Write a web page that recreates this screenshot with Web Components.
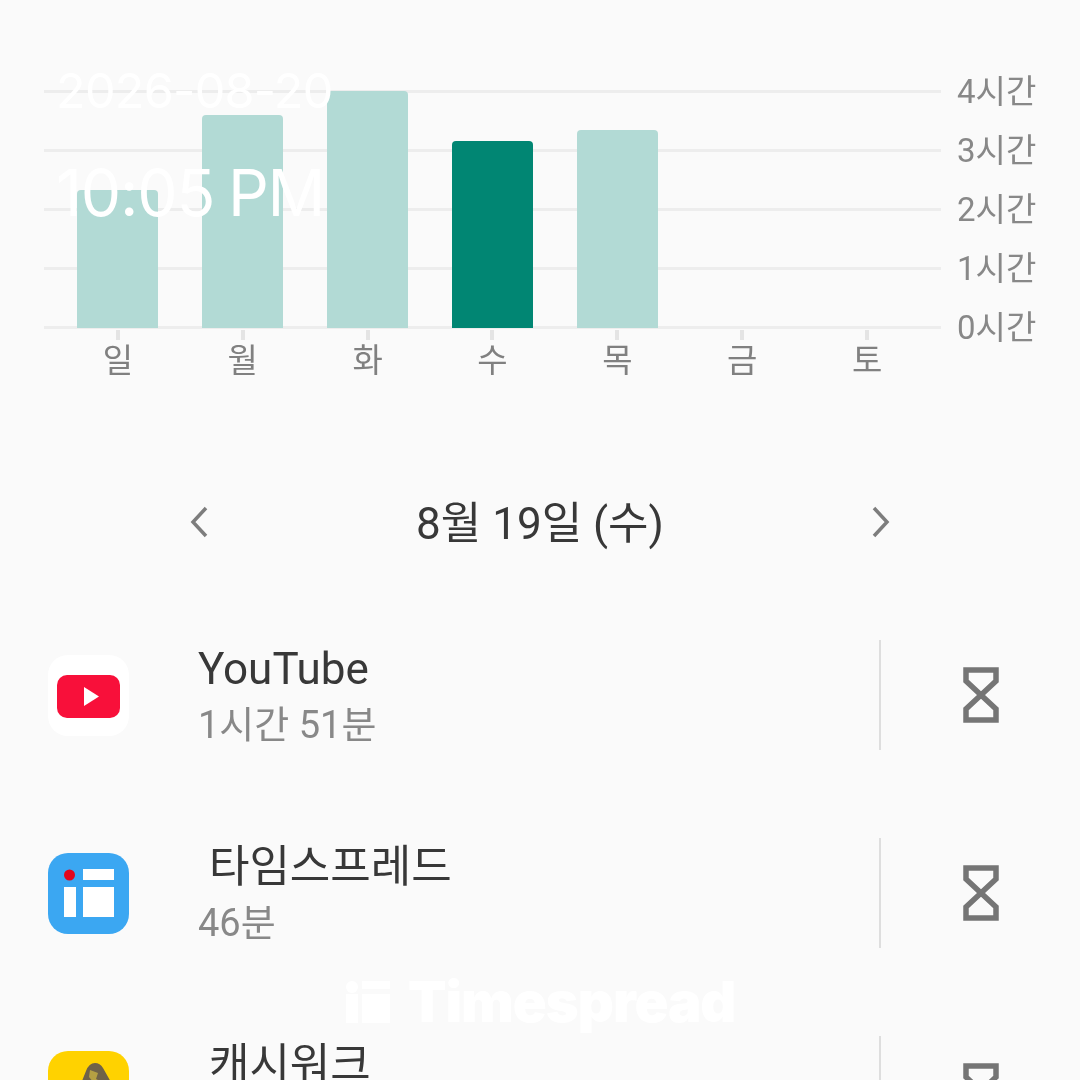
<!DOCTYPE html>
<html lang="ko">
<head>
<meta charset="utf-8">
<title>Screen time</title>
<style>
  html, body { margin: 0; height: 100%; background: #fafafa; overflow: hidden; }
  body { font-family: Roboto, "Noto Sans CJK KR", sans-serif; position: relative; width: 1080px; height: 1080px; }
  .content { filter: blur(.5px); }
</style>
</head>
<body>
<div class="content">
  <usage-chart></usage-chart>
  <date-nav label="8월 19일 (수)"></date-nav>
  <app-row name="YouTube" time="1시간 51분">
    <svg slot="icon" width="81" height="81" viewBox="0 0 81 81">
      <rect width="81" height="81" rx="20" fill="#fff"/>
      <rect x="9" y="20" width="63" height="43" rx="10" fill="#f8103a"/>
      <path d="M36 32 L51 41.500 L36 51 Z" fill="#fff"/>
    </svg>
  </app-row>
  <app-row name=" 타임스프레드" time="46분">
    <svg slot="icon" width="81" height="81" viewBox="0 0 81 81">
      <rect width="81" height="81" rx="20" fill="#3ba7f2"/>
      <rect x="16" y="34" width="12" height="30" fill="#fff"/>
      <rect x="35" y="16" width="31" height="11" fill="#fff"/>
      <rect x="35" y="34" width="31" height="30" fill="#fff"/>
      <circle cx="21.500" cy="22" r="5.500" fill="#e3061c"/>
    </svg>
  </app-row>
  <app-row name=" 캐시워크" time="">
    <svg slot="icon" width="81" height="81" viewBox="0 0 81 81">
      <rect width="81" height="81" rx="20" fill="#ffd200"/>
      <path d="M30 40 L38 20 Q41 12 47 12 Q52 12 55 17 L68 40 Z" fill="#6f6248"/>
      <path d="M42 19 L50 22 L48 28 L56 32 L46 32 L41 26 Z" fill="#b5a043"/>
    </svg>
  </app-row>
</div>
<date-stamp date="2026-08-20" time="10:05 PM"></date-stamp>
<brand-mark></brand-mark>

<script>
class UsageChart extends HTMLElement {
    connectedCallback() {
        const hours = ['4시간', '3시간', '2시간', '1시간', '0시간'];
        const days = [
            ['일', 138, false], ['월', 213, false], ['화', 237, false], ['수', 187, true],
            ['목', 198, false], ['금', 0, false], ['토', 0, false]
        ];
        this.attachShadow({ mode: 'open' });
        this.shadowRoot.innerHTML = `
      <style>
        :host { display: block; height: 380px; padding: 62px 0 0 44px; }
        .chart { display: grid; width: 1036px; grid-template-columns: 897px 1fr; }
        .lines { grid-area: 1 / 1; display: flex; flex-direction: column; }
        .line { height: 59px; display: flex; align-items: center; }
        .line i { display: block; width: 100%; height: 3px; background: #ededed; }
        .columns {
          grid-area: 1 / 1;
          display: grid;
          grid-template-columns: repeat(7, 1fr);
          padding: 0 11.400px;
          align-self: start;
        }
        .col { display: flex; flex-direction: column; align-items: center; }
        .area { height: 266px; display: flex; align-items: flex-end; }
        .bar { width: 81px; background: #b2dad5; border-radius: 4px 4px 0 0; }
        .bar.on { background: #018673; }
        .tick { width: 4px; height: 10px; margin-top: 2px; background: #e4e4e4; }
        .day {
          font: 400 33px/40px "Noto Sans CJK KR", sans-serif;
          color: #808080;
          margin-top: -2px;
        }
        .labels { grid-area: 1 / 2; display: flex; flex-direction: column; padding-left: 16px; }
        .labels span {
          height: 59px;
          display: flex;
          align-items: center;
          font: 400 33px/1 Roboto, "Noto Sans CJK KR", sans-serif;
          color: #888;
          white-space: nowrap;
        }
      </style>
      <div class="chart">
        <div class="lines">${hours.map(() => '<div class="line"><i></i></div>').join('')}</div>
        <div class="columns">
          ${days.map(d => `
            <div class="col">
              <div class="area"><div class="bar${d[2] ? ' on' : ''}" style="height:${d[1]}px"></div></div>
              <div class="tick"></div>
              <div class="day">${d[0]}</div>
            </div>`).join('')}
        </div>
        <div class="labels">${hours.map(h => `<span>${h}</span>`).join('')}</div>
      </div>
    `;
    }
}
customElements.define('usage-chart', UsageChart);

class DateNav extends HTMLElement {
    connectedCallback() {
        this.attachShadow({ mode: 'open' });
        this.shadowRoot.innerHTML = `
      <style>
        :host {
          display: flex;
          align-items: center;
          justify-content: space-between;
          height: 56px;
          margin: 54px 0 88px;
          padding: 0 188px;
        }
        svg { display: block; margin-top: -4px; }
        span {
          font: 400 44px/56px Roboto, "Noto Sans CJK KR", sans-serif;
          color: #383838;
          white-space: nowrap;
        }
      </style>
      <svg width="22" height="34" viewBox="0 0 22 34"><path d="M18 3 L5 17 L18 31" fill="none" stroke="#7d7d7d" stroke-width="3.500"/></svg>
      <span>${this.getAttribute('label')}</span>
      <svg width="22" height="34" viewBox="0 0 22 34"><path d="M4 3 L17 17 L4 31" fill="none" stroke="#7d7d7d" stroke-width="3.500"/></svg>
    `;
    }
}
customElements.define('date-nav', DateNav);

class AppRow extends HTMLElement {
    connectedCallback() {
        this.attachShadow({ mode: 'open' });
        this.shadowRoot.innerHTML = `
      <style>
        :host { display: flex; align-items: center; height: 110px; margin-bottom: 88px; padding-left: 48px; }
        .icon { width: 81px; height: 81px; flex: none; }
        .icon ::slotted(svg) { display: block; }
        .text { flex: 1; margin: 2px 0 0 69px; }
        .name {
          font: 400 44px/52px Roboto, "Noto Sans CJK KR", sans-serif;
          color: #383838;
          white-space: pre;
        }
        .time {
          font: 400 38px/48px Roboto, "Noto Sans CJK KR", sans-serif;
          color: #888;
          margin-top: 6px;
          min-height: 48px;
        }
        .action {
          width: 199px;
          height: 110px;
          border-left: 2px solid #dedede;
          display: flex;
          align-items: center;
          justify-content: center;
        }
      </style>
      <div class="icon"><slot name="icon"></slot></div>
      <div class="text">
        <div class="name">${this.getAttribute('name')}</div>
        <div class="time">${this.getAttribute('time')}</div>
      </div>
      <div class="action">
        <svg width="36" height="56" viewBox="0 0 36 56">
          <path d="M3 3 H33 V14 L18 28 L33 42 V53 H3 V42 L18 28 L3 14 Z" fill="none" stroke="#757575" stroke-width="5.500"/>
        </svg>
      </div>
    `;
    }
}
customElements.define('app-row', AppRow);

class DateStamp extends HTMLElement {
    connectedCallback() {
        this.attachShadow({ mode: 'open' });
        this.shadowRoot.innerHTML = `
      <style>
        :host { position: absolute; left: 56px; top: 62px; color: #fff; font-family: Inter, Roboto, sans-serif; font-weight: 400; }
        div { white-space: nowrap; }
        .date { font-size: 48.500px; line-height: 58px; letter-spacing: -.7px; }
        .time { font-size: 64px; line-height: 74px; margin-top: 36px; letter-spacing: -1.200px; word-spacing: -3px; }
      </style>
      <div class="date">${this.getAttribute('date')}</div>
      <div class="time">${this.getAttribute('time')}</div>
    `;
    }
}
customElements.define('date-stamp', DateStamp);

class BrandMark extends HTMLElement {
    connectedCallback() {
        this.attachShadow({ mode: 'open' });
        this.shadowRoot.innerHTML = `
      <style>
        :host { position: absolute; left: 346px; top: 974px; display: flex; align-items: center; gap: 18px; }
        svg { display: block; }
        span { font: 900 56px/56px Inter, sans-serif; color: #fff; letter-spacing: -1px; }
      </style>
      <svg width="44" height="42" viewBox="0 0 44 42">
        <circle cx="6" cy="6" r="6" fill="#fff"/>
        <rect x="0" y="13" width="12" height="29" fill="#fff"/>
        <rect x="16" y="0" width="28" height="8" fill="#fff"/>
        <rect x="16" y="13" width="28" height="29" fill="#fff"/>
      </svg>
      <span>Timespread</span>
    `;
    }
}
customElements.define('brand-mark', BrandMark);
</script>
</body>
</html>
